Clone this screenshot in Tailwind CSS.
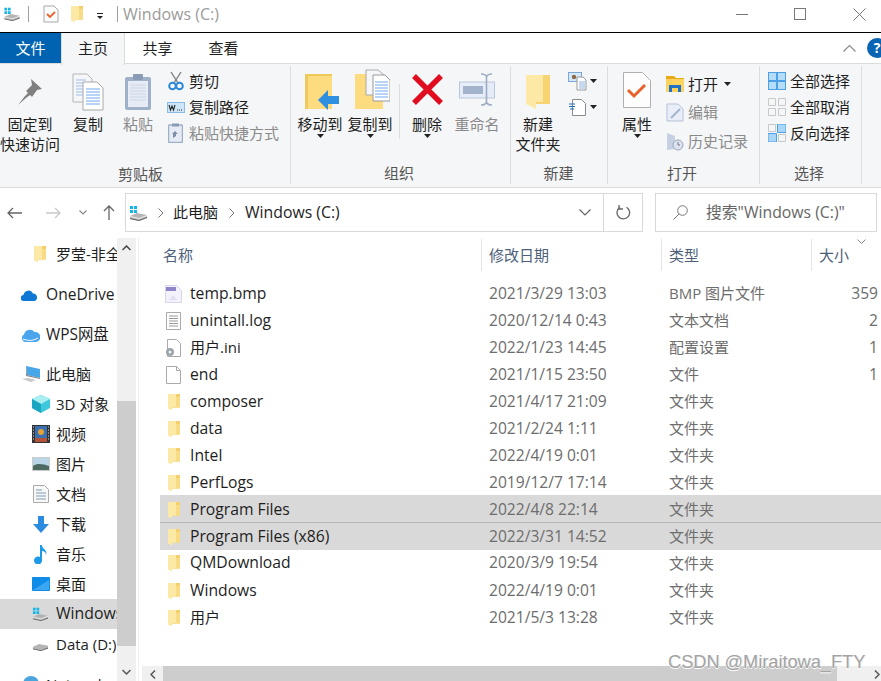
<!DOCTYPE html>
<html lang="zh-CN">
<head>
<meta charset="UTF-8">
<title>Windows (C:)</title>
<script src="https://cdn.jsdelivr.net/npm/@tailwindcss/browser@4"></script>
</head>
<body class="bg-white overflow-hidden">
<svg class="hidden">
  <defs>
    <symbol id="folder" viewBox="0 0 14 18">
      <path d="M2 1h11v13.500H2z" fill="#f4cf6c"/>
      <path d="M1 1h8v14H5v2.500L1 15.500z" fill="#fde9a6"/>
      <path d="M9 4h4v10.500H5V15h4z" fill="#f8dc85"/>
    </symbol>
    <symbol id="drive" viewBox="0 0 19 18">
      <path d="M1 12l7-3 10 2v3l-8 3-9-2z" fill="#b5b5b5"/>
      <path d="M1 12l9 2 8-3v1l-8 3-9-2z" fill="#f0f0f0"/>
      <path d="M1 14l9 2 8-3v1l-8 3-9-2z" fill="#666"/>
      <path d="M1 2h3v3H1zM5 2h3v3H5zM1 6h3v3H1zM5 6h3v3H5z" fill="#12b5ea"/>
    </symbol>
  </defs>
</svg>
<div class="relative w-[881px] h-[681px] overflow-hidden font-['Open_Sans','Noto_Sans_CJK_SC',sans-serif] text-[15px] text-[#1e1e1e]">

  <!-- title bar -->
  <div class="h-[32px] pb-[4px] flex items-center">
    <svg class="ml-[3px] w-[18px] h-[16px]"><use href="#drive"/></svg>
    <div class="ml-[7px] w-px h-[16px] bg-[#a0a0a0]"></div>
    <svg class="ml-[14px] w-[16px] h-[18px]" viewBox="0 0 16 18"><path d="M1 1h10l4 4v12H1z" fill="#fdfdfd" stroke="#a8a8a8"/><path d="M4 9l3 3 5-5" fill="none" stroke="#e8602c" stroke-width="1.800"/></svg>
    <svg class="ml-[11px] w-[14px] h-[18px]"><use href="#folder"/></svg>
    <svg class="ml-[12px] w-[8px] h-[8px] mt-[4px]" viewBox="0 0 8 8"><path d="M1 1h6v1H1z" fill="#222"/><path d="M1 4h6L4 7z" fill="#222"/></svg>
    <div class="ml-[13px] w-px h-[16px] bg-[#a0a0a0]"></div>
    <span class="ml-[5px] text-[#9b9b9b] text-[16px]">Windows (C:)</span>
    <div class="ml-auto flex items-center">
      <div class="w-[12px] h-px bg-[#777] mr-[46px]"></div>
      <div class="w-[12px] h-[12px] border border-[#777] mr-[47px]"></div>
      <svg class="w-[13px] h-[13px] mr-[15px]" viewBox="0 0 13 13"><path d="M0.500 0.500l12 12M12.500 0.500l-12 12" stroke="#777" fill="none"/></svg>
    </div>
  </div>
  <div class="h-px bg-black"></div>

  <!-- tabs -->
  <div class="h-[31px] flex items-stretch relative">
    <div class="w-[61px] bg-[#0063b1] text-white flex items-center justify-center">文件</div>
    <div class="w-[64px] pb-[2px] bg-[#f5f6f7] border-x border-[#dadbdc] relative z-10 h-[32px] flex items-center justify-center">主页</div>
    <div class="w-[65px] flex items-center justify-center">共享</div>
    <div class="w-[67px] flex items-center justify-center">查看</div>
    <div class="ml-auto pb-[2px] flex items-center">
      <svg class="w-[13px] h-[8px] mr-[11px]" viewBox="0 0 13 8"><path d="M0.500 7.500l6-6 6 6" fill="none" stroke="#8a8a8a" stroke-width="1.200"/></svg>
      <div class="w-[20px] h-[20px] -mr-[6px] rounded-full bg-[#0a64b4] text-white text-[14px] font-bold flex items-center justify-center">?</div>
    </div>
  </div>

  <!-- ribbon -->
  <div class="h-[123px] bg-[#f5f6f7] border-y border-[#dadbdc] flex box-content -mt-px relative">

    <div class="w-[291px] pt-[1px] relative flex flex-col">
      <div class="flex h-[100px]">
        <div class="w-[60px] flex flex-col items-center pt-[12px] shrink-0">
          <svg class="w-[28px] h-[28px]" viewBox="0 0 28 28"><path d="M15 2l11 10-5 1-5 7-2-2-4 3-8 7 7-9 3-3-2-2 6-6z" fill="#808080"/></svg>
          <div class="mt-[9px] leading-[20px] text-center whitespace-nowrap">固定到<br>快速访问</div>
        </div>
        <div class="w-[50px] ml-[3px] flex flex-col items-center pt-[8px] shrink-0">
          <svg class="w-[32px] h-[38px]" viewBox="0 0 32 38"><path d="M1 1h14l5 5v23H1z" fill="#f4f6fa" stroke="#b5b5b5"/><path d="M4 7h10M4 10h13M4 13h13M4 16h13M4 19h13M4 22h13" stroke="#9dbde8"/><path d="M11 9h14l6 6v22H11z" fill="#fff" stroke="#a8a8a8"/><path d="M14 16h14M14 19h14M14 22h14M14 25h14M14 28h14M14 31h14" stroke="#6ea6ef"/></svg>
          <div class="mt-[3px] leading-[20px]">复制</div>
        </div>
        <div class="w-[50px] flex flex-col items-center pt-[8px] shrink-0 text-[#8a8a8a]">
          <svg class="w-[28px] h-[38px]" viewBox="0 0 28 38"><rect x="1" y="4" width="26" height="33" rx="2" fill="#9fb1c9"/><rect x="4" y="8" width="20" height="26" fill="#e6ebf5"/><path d="M6 12h16M6 15h16M6 18h16M6 21h16M6 24h16M6 27h16" stroke="#ccd5e6"/><rect x="9" y="1" width="10" height="6" rx="1" fill="#8a9cb5"/></svg>
          <div class="mt-[3px] leading-[20px]">粘贴</div>
        </div>
        <div class="pt-[3px] flex flex-col shrink-0 ml-[5px]">
          <div class="h-[26px] flex items-center gap-[6px]">
            <svg class="w-[16px] h-[20px]" viewBox="0 0 16 20"><path d="M3 1l7 11M13 1L6 12" stroke="#777" stroke-width="1.300" fill="none"/><circle cx="4.500" cy="15" r="3.300" fill="none" stroke="#2b88d8" stroke-width="2"/><circle cx="11.500" cy="15" r="3.300" fill="none" stroke="#2b88d8" stroke-width="2"/></svg>
            <span class="-ml-[1px]">剪切</span>
          </div>
          <div class="h-[26px] flex items-center gap-[6px] -ml-[1px]">
            <svg class="w-[18px] h-[11px]" viewBox="0 0 18 11"><rect x="0.500" y="0.500" width="17" height="10" fill="#cfe6f8" stroke="#8abde6"/><path d="M2 3l1.500 5L5 4l1.500 4L8 3" fill="none" stroke="#222" stroke-width="1.100"/><path d="M10 8h1M12 8h1M14 8h1" stroke="#333"/></svg>
            <span class="-ml-[2px]">复制路径</span>
          </div>
          <div class="h-[26px] flex items-center gap-[6px] text-[#8a8a8a]">
            <svg class="w-[15px] h-[20px]" viewBox="0 0 15 20"><rect x="0.500" y="2" width="14" height="17.500" rx="1" fill="#e6ebf5" stroke="#9fb1c9" stroke-width="1.500"/><rect x="4" y="0.500" width="7" height="3" fill="#8a9cb5"/><path d="M5 15v-4l-1 0 3-3 3 3h-2v2z" fill="#7c8ea8"/></svg>
            <span>粘贴快捷方式</span>
          </div>
        </div>
      </div>
      <div class="text-center text-[#555] leading-[20px] mt-[-1px] pr-[10px]">剪贴板</div>
      <div class="absolute right-0 top-[2px] bottom-[3px] w-px bg-[#dcdddf]"></div>
    </div>

    <div class="w-[220px] relative flex flex-col">
      <div class="flex h-[100px]">
        <div class="w-[50px] ml-[4px] flex flex-col items-center pt-[9px] shrink-0">
          <svg class="w-[35px] h-[37px] ml-[4px]" viewBox="0 0 35 37"><path d="M0 1h27v35H0z" fill="#fcdc7e"/><path d="M0 1h27v2H3v33H0z" fill="#f0c95c"/><path d="M23 17v6h11v8H23v6L13 27z" fill="#2f8fe0"/></svg>
          <div class="mt-[4px] leading-[20px] whitespace-nowrap">移动到</div>
          <svg class="w-[7px] h-[4px]" viewBox="0 0 7 4"><path d="M0 0h7L3.500 4z" fill="#222"/></svg>
        </div>
        <div class="w-[50px] flex flex-col items-center pt-[5px] shrink-0">
          <svg class="w-[35px] h-[41px] ml-[4px]" viewBox="0 0 35 41"><path d="M0 5h28v35H0z" fill="#fcdc7e"/><path d="M11 1h12l6 5v20H11z" fill="#f4f6fa" stroke="#aaa"/><path d="M18 6h12l5 5v21H18z" fill="#fff" stroke="#999"/><path d="M20 13h13M20 16h13M20 19h13M20 22h13M20 25h13M20 28h13" stroke="#6ea6ef"/></svg>
          <div class="mt-[4px] leading-[20px] whitespace-nowrap">复制到</div>
          <svg class="w-[7px] h-[4px]" viewBox="0 0 7 4"><path d="M0 0h7L3.500 4z" fill="#222"/></svg>
        </div>
        <div class="w-[50px] ml-[7px] flex flex-col items-center pt-[9px] shrink-0">
          <svg class="w-[33px] h-[33px] mb-[4px]" viewBox="0 0 33 33"><path d="M3 3l27 27M30 3L3 30" stroke="#e10c1f" stroke-width="5.500" fill="none"/></svg>
          <div class="mt-[4px] leading-[20px]">删除</div>
          <svg class="w-[7px] h-[4px]" viewBox="0 0 7 4"><path d="M0 0h7L3.500 4z" fill="#222"/></svg>
        </div>
        <div class="w-[50px] flex flex-col items-center pt-[9px] shrink-0 text-[#8a8a8a]">
          <svg class="w-[36px] h-[33px] mb-[4px]" viewBox="0 0 36 33"><rect x="0.500" y="9" width="35" height="16" fill="#e6edf8" stroke="#b9c7dc"/><rect x="4" y="13" width="20" height="8" fill="#a3b3cb"/><path d="M22 1c3 0 5 1 5.500 3C28 2 30 1 33 1M27.500 4v25M22 32c3 0 5-1 5.500-3 .5 2 2.500 3 5.500 3" fill="none" stroke="#9eadc4" stroke-width="1.600"/></svg>
          <div class="mt-[4px] leading-[20px] whitespace-nowrap">重命名</div>
        </div>
      </div>
      <div class="text-center text-[#555] leading-[20px] mt-[-1px] pr-[4px]">组织</div>
      <div class="absolute left-[108px] top-[20px] h-[55px] w-px bg-[#dcdddf]"></div>
      <div class="absolute right-0 top-[2px] bottom-[3px] w-px bg-[#dcdddf]"></div>
    </div>

    <div class="w-[97px] relative flex flex-col">
      <div class="flex h-[100px]">
        <div class="w-[56px] flex flex-col items-center pt-[10px] shrink-0 -ml-[1px]">
          <svg class="w-[26px] h-[35px]" viewBox="0 0 26 35"><path d="M4 1h21v29H4z" fill="#f7d471"/><path d="M1 1h17v27h-7v7l-10-5z" fill="#fde9a6"/></svg>
          <div class="mt-[5px] leading-[20px] text-center">新建<br>文件夹</div>
        </div>
        <div class="pt-[4px] ml-[2px] shrink-0 flex flex-col">
          <div class="h-[26px] flex items-center">
            <svg class="w-[19px] h-[19px]" viewBox="0 0 19 19"><rect x="0.500" y="0.500" width="13" height="9" fill="#d7e8f8" stroke="#7aa7d8"/><circle cx="6" cy="5" r="2.200" fill="#8b6b4a"/><path d="M9 5h6l3 3v10H9z" fill="#fff" stroke="#999"/><path d="M11 10h6M11 12h6M11 14h6M11 16h6" stroke="#8fb3e0"/></svg>
            <svg class="ml-[3px] w-[7px] h-[4px]" viewBox="0 0 7 4"><path d="M0 0h7L3.500 4z" fill="#222"/></svg>
          </div>
          <div class="h-[26px] flex items-center">
            <svg class="w-[19px] h-[19px]" viewBox="0 0 19 19"><path d="M4.500 1.500h9l4 4v12h-13z" fill="#fff" stroke="#8a8a8a"/><path d="M1 6h6M1 8.500h6M2 11h4" stroke="#1f6fb5"/></svg>
            <svg class="ml-[3px] w-[7px] h-[4px]" viewBox="0 0 7 4"><path d="M0 0h7L3.500 4z" fill="#222"/></svg>
          </div>
        </div>
      </div>
      <div class="text-center text-[#555] leading-[20px] mt-[-1px] pr-[2px]">新建</div>
      <div class="absolute right-0 top-[2px] bottom-[3px] w-px bg-[#dcdddf]"></div>
    </div>

    <div class="w-[152px] relative flex flex-col">
      <div class="flex h-[100px]">
        <div class="w-[58px] flex flex-col items-center pt-[8px] shrink-0">
          <svg class="w-[28px] h-[36px]" viewBox="0 0 28 36"><path d="M0.500 0.500h19l8 8v27h-27z" fill="#fdfdfd" stroke="#b0b0b0"/><path d="M5 18l6 6 11-11" fill="none" stroke="#e8602c" stroke-width="3"/></svg>
          <div class="mt-[6px] leading-[20px]">属性</div>
          <svg class="w-[7px] h-[4px]" viewBox="0 0 7 4"><path d="M0 0h7L3.500 4z" fill="#222"/></svg>
        </div>
        <div class="pt-[7px] flex flex-col shrink-0">
          <div class="h-[26px] flex items-center">
            <svg class="w-[18px] h-[16px]" viewBox="0 0 18 16"><path d="M0 0h8l2 2h8v4H0z" fill="#e8a916"/><path d="M0 3h18v13H0z" fill="#fcd35f"/><path d="M3 16v-7h12v7h-3v-4H6v4z" fill="#1e72c8"/></svg>
            <span class="ml-[4px]">打开</span>
            <svg class="ml-[6px] w-[7px] h-[4px]" viewBox="0 0 7 4"><path d="M0 0h7L3.500 4z" fill="#222"/></svg>
          </div>
          <div class="h-[30px] flex items-center text-[#8a8a8a]">
            <svg class="w-[18px] h-[19px]" viewBox="0 0 18 19"><path d="M1 1h11l5 5v12H1z" fill="#e9eef8" stroke="#b3c1d8"/><path d="M5 15l9-9" stroke="#a5b4cd" stroke-width="2"/></svg>
            <span class="ml-[4px]">编辑</span>
          </div>
          <div class="h-[28px] flex items-center text-[#8a8a8a]">
            <svg class="w-[18px] h-[19px]" viewBox="0 0 18 19"><path d="M1 1l8 3v13l-8 1z" fill="#c5d0e2"/><circle cx="12" cy="13" r="5" fill="#dde3ee" stroke="#9aa7bb"/><path d="M12 10v3h2" stroke="#778" fill="none"/></svg>
            <span class="ml-[4px]">历史记录</span>
          </div>
        </div>
      </div>
      <div class="text-center text-[#555] leading-[20px] mt-[-1px] pr-[4px]">打开</div>
      <div class="absolute right-0 top-[2px] bottom-[3px] w-px bg-[#dcdddf]"></div>
    </div>

    <div class="w-[102px] relative flex flex-col">
      <div class="h-[100px] pt-[4px] pl-[8px] flex flex-col">
        <div class="h-[26px] flex items-center">
          <svg class="w-[18px] h-[18px]" viewBox="0 0 18 18"><rect width="18" height="18" fill="#4ba0e8"/><path d="M1 1h7v7H1zM10 1h7v7h-7zM1 10h7v7H1zM10 10h7v7h-7z" fill="#b5dcf8"/></svg>
          <span class="ml-[4px]">全部选择</span>
        </div>
        <div class="h-[26px] flex items-center">
          <svg class="w-[18px] h-[18px]" viewBox="0 0 18 18"><path d="M.500.500h7v7h-7zM10.500.500h7v7h-7zM.500 10.500h7v7h-7zM10.500 10.500h7v7h-7z" fill="#f5f6f7" stroke="#c8c8c8"/></svg>
          <span class="ml-[4px]">全部取消</span>
        </div>
        <div class="h-[26px] flex items-center">
          <svg class="w-[18px] h-[18px]" viewBox="0 0 18 18"><path d="M.500.500h7v7h-7zM10.500 10.500h7v7h-7z" fill="#f5f6f7" stroke="#c8c8c8"/><path d="M9.500 0h8.500v8.500H9.500zM0 9.500h8.500V18H0z" fill="#a9d6f7" stroke="#4ba0e8"/></svg>
          <span class="ml-[4px]">反向选择</span>
        </div>
      </div>
      <div class="text-center text-[#555] leading-[20px] mt-[-1px] pr-[4px]">选择</div>
      <div class="absolute right-0 top-[2px] bottom-[3px] w-px bg-[#dcdddf]"></div>
    </div>
  </div>

  <!-- address row -->
  <div class="h-[50px] pb-[1px] flex items-center">
    <div class="w-[125px] shrink-0 flex items-center">
      <svg class="ml-[7px] w-[15px] h-[12px]" viewBox="0 0 15 12"><path d="M6 1L1 6l5 5M1 6h14" fill="none" stroke="#666" stroke-width="1.300"/></svg>
      <svg class="ml-[24px] w-[15px] h-[12px]" viewBox="0 0 15 12"><path d="M9 1l5 5-5 5M14 6H0" fill="none" stroke="#c9c9c9" stroke-width="1.300"/></svg>
      <svg class="ml-[18px] w-[8px] h-[5px]" viewBox="0 0 8 5"><path d="M.5.500l3.500 3.500L7.500.500" fill="none" stroke="#888" stroke-width="1.200"/></svg>
      <svg class="ml-[16px] w-[12px] h-[15px]" viewBox="0 0 12 15"><path d="M1 6l5-5 5 5M6 1v14" fill="none" stroke="#666" stroke-width="1.300"/></svg>
    </div>
    <div class="w-[518px] h-[39px] border border-[#d9d9d9] flex items-center shrink-0">
      <svg class="ml-[3px] w-[19px] h-[18px]"><use href="#drive"/></svg>
      <svg class="ml-[10px] w-[6px] h-[10px]" viewBox="0 0 6 10"><path d="M.5.500L5 5 .5 9.500" fill="none" stroke="#777"/></svg>
      <span class="ml-[9px]">此电脑</span>
      <svg class="ml-[11px] w-[6px] h-[10px]" viewBox="0 0 6 10"><path d="M.5.500L5 5 .5 9.500" fill="none" stroke="#777"/></svg>
      <span class="ml-[10px] text-[15.800px]">Windows (C:)</span>
      <div class="ml-auto flex items-center h-full">
        <svg class="w-[12px] h-[7px]" viewBox="0 0 12 7"><path d="M.5.500L6 6l5.500-5.500" fill="none" stroke="#666" stroke-width="1.200"/></svg>
        <div class="ml-[12px] w-px h-full bg-[#d9d9d9]"></div>
        <svg class="ml-[12px] mr-[11px] w-[15px] h-[15px]" viewBox="0 0 15 15"><path d="M10.500 2.200A6.300 6.300 0 1 1 4 2.300" fill="none" stroke="#666" stroke-width="1.300"/><path d="M3 0v4h4" fill="none" stroke="#666" stroke-width="1.300"/></svg>
      </div>
    </div>
    <div class="ml-[12px] w-[222px] h-[39px] border border-[#d9d9d9] flex items-center shrink-0">
      <svg class="ml-[17px] w-[15px] h-[15px]" viewBox="0 0 15 15"><circle cx="9.500" cy="5.500" r="4.800" fill="none" stroke="#777"/><path d="M6 9l-5.500 5.500" stroke="#777"/></svg>
      <span class="ml-[18px] text-[#666] text-[15.800px]">搜索"Windows (C:)"</span>
    </div>
  </div>

  <!-- main -->
  <div class="flex h-[444px]">
    <!-- navigation pane -->
    <div class="w-[117px] shrink-0 overflow-hidden whitespace-nowrap">
      <div class="h-[30px] pl-[33px] flex items-center mt-[1px]"><svg class="w-[14px] h-[18px] shrink-0"><use href="#folder"/></svg><span class="ml-[9px]">罗莹-非全</span></div>
      <div class="h-[30px] pt-[2px] mt-[10px] pl-[21px] flex items-center"><svg class="w-[17px] h-[11px] shrink-0" viewBox="0 0 17 11"><path d="M3 11a3 3 0 0 1-.5-6A5 5 0 0 1 12 3.500 4 4 0 0 1 14 11z" fill="#0f78d4"/></svg><span class="ml-[8px] text-[15.600px]">OneDrive</span></div>
      <div class="h-[30px] pt-[2px] mt-[10px] pl-[21px] flex items-center"><svg class="w-[19px] h-[14px] shrink-0" viewBox="0 0 19 14"><path d="M4 14a4 4 0 0 1-1-7.500A6 6 0 0 1 13.500 4 5 5 0 0 1 15 14z" fill="#4aa5ec"/><path d="M2 11c5 2 10 2 15-1" stroke="#fff" fill="none"/></svg><span class="ml-[6px] text-[15.400px]">WPS网盘</span></div>
      <div class="h-[30px] mt-[10px] pl-[22px] flex items-center"><svg class="w-[19px] h-[18px] shrink-0" viewBox="0 0 19 18"><path d="M4 1l14 3v9L5 10z" fill="#48a7e8"/><path d="M4 1l1 9 13 3v1L4 11z" fill="#888"/><path d="M0 14l6-1 8 2-5 2z" fill="#c9c9c9"/></svg><span class="ml-[5px]">此电脑</span></div>
      <div class="h-[30px] pl-[32px] flex items-center"><svg class="w-[18px] h-[18px] shrink-0" viewBox="0 0 18 18"><path d="M9 0l9 4v9l-9 5-9-5V4z" fill="#3fc7dc"/><path d="M9 0l9 4-9 5-9-5z" fill="#a9eef3"/><path d="M9 9v9l-9-5V4z" fill="#1aa6c0"/></svg><span class="ml-[6px]">3D 对象</span></div>
      <div class="h-[30px] pl-[32px] flex items-center"><svg class="w-[18px] h-[18px] shrink-0" viewBox="0 0 18 18"><rect width="18" height="18" fill="#333"/><path d="M1 2h1M1 5h1M1 8h1M1 11h1M1 14h1M16 2h1M16 5h1M16 8h1M16 11h1M16 14h1" stroke="#ddd"/><rect x="3" y="1" width="12" height="16" fill="#3a6fb0"/><circle cx="9" cy="7" r="3" fill="#e2a23a"/><path d="M3 13h12v4H3z" fill="#b3523a"/></svg><span class="ml-[6px]">视频</span></div>
      <div class="h-[30px] pl-[32px] flex items-center"><svg class="w-[18px] h-[14px] shrink-0" viewBox="0 0 18 14"><rect width="18" height="14" fill="#ccc"/><rect x="1" y="1" width="16" height="12" fill="#b9d6e8"/><path d="M1 9c4-3 10-2 16 0v4H1z" fill="#4d6b62"/></svg><span class="ml-[6px]">图片</span></div>
      <div class="h-[30px] pl-[33px] flex items-center"><svg class="w-[16px] h-[18px] shrink-0" viewBox="0 0 16 18"><path d="M.5.500h11l4 4v13H.5z" fill="#f8f8f8" stroke="#aaa"/><path d="M3 5h6M3 8h10M3 11h10M3 14h10" stroke="#7f99b5"/></svg><span class="ml-[7px]">文档</span></div>
      <div class="h-[30px] pl-[33px] flex items-center"><svg class="w-[16px] h-[17px] shrink-0" viewBox="0 0 16 17"><path d="M5 0h6v8h5l-8 9-8-9h5z" fill="#2b8be0"/></svg><span class="ml-[7px]">下载</span></div>
      <div class="h-[30px] pl-[34px] flex items-center"><svg class="w-[14px] h-[19px] shrink-0" viewBox="0 0 14 19"><path d="M6 0h2c0 4 6 5 4 10 0-3-2-4-4-4v9a4 4 0 1 1-2-3z" fill="#1c9ae8"/></svg><span class="ml-[8px]">音乐</span></div>
      <div class="h-[30px] pl-[32px] flex items-center"><svg class="w-[18px] h-[14px] shrink-0" viewBox="0 0 18 14"><rect width="18" height="14" rx="1" fill="#0f8be8"/><path d="M1 13L17 3v10z" fill="#3ba6f2"/></svg><span class="ml-[6px]">桌面</span></div>
      <div class="h-[30px] pl-[31px] flex items-center bg-[#d9d9d9]"><svg class="w-[19px] h-[16px] shrink-0"><use href="#drive"/></svg><span class="ml-[6px] text-[15.800px]">Windows (C:)</span></div>
      <div class="h-[30px] pl-[31px] flex items-center"><svg class="w-[19px] h-[16px] shrink-0" viewBox="0 0 19 18"><path d="M1 12l7-3 10 2v3l-8 3-9-2z" fill="#b5b5b5"/><path d="M1 14l9 2 8-3v1l-8 3-9-2z" fill="#666"/></svg><span class="ml-[6px]">Data (D:)</span></div>
      <div class="h-[30px] mt-[10px] pl-[22px] flex items-center"><svg class="w-[18px] h-[18px] shrink-0" viewBox="0 0 18 18"><circle cx="9" cy="9" r="8" fill="#4aa5dc"/></svg><span class="ml-[6px]">Network</span></div>
    </div>
    <!-- nav scrollbar -->
    <div class="w-[19px] shrink-0 bg-[#f0f0f0] flex flex-col items-center">
      <div class="h-[163px] w-full flex justify-center pt-[7px]"><svg class="w-[9px] h-[6px]" viewBox="0 0 9 6"><path d="M.5 5L4.500 1l4 4" fill="none" stroke="#444" stroke-width="1.500"/></svg></div>
      <div class="h-[245px] w-full bg-[#cdcdcd]"></div>
      <div class="flex-1 w-full flex justify-center pt-[23px]"><svg class="w-[9px] h-[6px]" viewBox="0 0 9 6"><path d="M.5 1L4.500 5l4-4" fill="none" stroke="#555" stroke-width="1.500"/></svg></div>
    </div>
    <div class="w-[2px] shrink-0"></div>
    <div class="w-px shrink-0 bg-[#f0f0f0]"></div>

    <!-- file list -->
    <div class="flex-1 min-w-0 flex flex-col relative overflow-hidden">
      <div class="h-[41px] pt-[1px] flex shrink-0 text-[#4c607a]">
        <div class="w-[343px] pl-[24px] h-[32px] flex items-center shrink-0 border-r border-[#e5e5e5]">名称</div>
        <div class="w-[180px] pl-[7px] h-[32px] flex items-center shrink-0 border-r border-[#e5e5e5]">修改日期</div>
        <div class="w-[150px] pl-[7px] h-[32px] flex items-center shrink-0 border-r border-[#e5e5e5]">类型</div>
        <div class="flex-1 pl-[7px] h-[32px] flex items-center relative">大小
          <svg class="absolute left-[45px] top-0 w-[9px] h-[5px]" viewBox="0 0 9 5"><path d="M.5.500L4.500 4.500l4-4" fill="none" stroke="#888"/></svg>
        </div>
      </div>
      <div class="pl-[21px] flex flex-col text-[#6d6d6d]">
        <div class="h-[27px] pt-[2px] flex items-center"><svg class="ml-[5px] w-[17px] h-[18px] shrink-0" viewBox="0 0 17 18"><path d="M.5.500h11l5 5v12H.5z" fill="#f3f1fb" stroke="#d8d4ea"/><path d="M1 2h10v4H1z" fill="#8f85c9"/><path d="M4 15l4-5 4 5z" fill="#e2def3"/></svg><span class="ml-[8px] w-[299px] text-[#1e1e1e] text-[15.700px] shrink-0">temp.bmp</span><span class="w-[180px] text-[15.600px] shrink-0">2021/3/29 13:03</span><span class="w-[150px] shrink-0">BMP 图片文件</span><span class="flex-1 text-right pr-[3px] text-[15.600px]">359</span></div>
        <div class="h-[27px] pt-[2px] flex items-center"><svg class="ml-[5px] w-[17px] h-[18px] shrink-0" viewBox="0 0 17 18"><path d="M1.500.500h14v17h-14z" fill="#fff" stroke="#aaa"/><path d="M4 4h9M4 6.500h9M4 9h9M4 11.500h9M4 14h9" stroke="#9a9a9a"/></svg><span class="ml-[8px] w-[299px] text-[#1e1e1e] text-[15.700px] shrink-0">unintall.log</span><span class="w-[180px] text-[15.600px] shrink-0">2020/12/14 0:43</span><span class="w-[150px] shrink-0">文本文档</span><span class="flex-1 text-right pr-[3px] text-[15.600px]">2</span></div>
        <div class="h-[27px] pt-[2px] flex items-center"><svg class="ml-[5px] w-[17px] h-[18px] shrink-0" viewBox="0 0 17 18"><path d="M2.500.500h9l4 4v13h-13z" fill="#fff" stroke="#aaa"/><circle cx="5" cy="13" r="4" fill="#9aa4ad"/><circle cx="5" cy="13" r="1.500" fill="#eee"/></svg><span class="ml-[8px] w-[299px] text-[#1e1e1e] shrink-0">用户.ini</span><span class="w-[180px] text-[15.600px] shrink-0">2022/1/23 14:45</span><span class="w-[150px] shrink-0">配置设置</span><span class="flex-1 text-right pr-[3px] text-[15.600px]">1</span></div>
        <div class="h-[27px] pt-[2px] flex items-center"><svg class="ml-[5px] w-[17px] h-[18px] shrink-0" viewBox="0 0 17 18"><path d="M1.500.500h10l4 4v13h-14z" fill="#fff" stroke="#aaa"/><path d="M11.500.500v4h4" fill="none" stroke="#aaa"/></svg><span class="ml-[8px] w-[299px] text-[#1e1e1e] text-[15.700px] shrink-0">end</span><span class="w-[180px] text-[15.600px] shrink-0">2021/1/15 23:50</span><span class="w-[150px] shrink-0">文件</span><span class="flex-1 text-right pr-[3px] text-[15.600px]">1</span></div>
        <div class="h-[27px] pt-[2px] flex items-center"><svg class="ml-[7px] w-[14px] h-[18px] mr-[1px] shrink-0"><use href="#folder"/></svg><span class="ml-[8px] w-[299px] text-[#1e1e1e] text-[15.700px] shrink-0">composer</span><span class="w-[180px] text-[15.600px] shrink-0">2021/4/17 21:09</span><span class="w-[150px] shrink-0">文件夹</span></div>
        <div class="h-[27px] pt-[2px] flex items-center"><svg class="ml-[7px] w-[14px] h-[18px] mr-[1px] shrink-0"><use href="#folder"/></svg><span class="ml-[8px] w-[299px] text-[#1e1e1e] text-[15.700px] shrink-0">data</span><span class="w-[180px] text-[15.600px] shrink-0">2021/2/24 1:11</span><span class="w-[150px] shrink-0">文件夹</span></div>
        <div class="h-[27px] pt-[2px] flex items-center"><svg class="ml-[7px] w-[14px] h-[18px] mr-[1px] shrink-0"><use href="#folder"/></svg><span class="ml-[8px] w-[299px] text-[#1e1e1e] text-[15.700px] shrink-0">Intel</span><span class="w-[180px] text-[15.600px] shrink-0">2022/4/19 0:01</span><span class="w-[150px] shrink-0">文件夹</span></div>
        <div class="h-[27px] pt-[2px] flex items-center"><svg class="ml-[7px] w-[14px] h-[18px] mr-[1px] shrink-0"><use href="#folder"/></svg><span class="ml-[8px] w-[299px] text-[#1e1e1e] text-[15.700px] shrink-0">PerfLogs</span><span class="w-[180px] text-[15.600px] shrink-0">2019/12/7 17:14</span><span class="w-[150px] shrink-0">文件夹</span></div>
        <div class="h-[28px] pt-[2px] flex items-center bg-[#d9d9d9] border-b border-[#b8b8b8]"><svg class="ml-[7px] w-[14px] h-[18px] mr-[1px] shrink-0"><use href="#folder"/></svg><span class="ml-[8px] w-[299px] text-[#1e1e1e] text-[15.700px] shrink-0">Program Files</span><span class="w-[180px] text-[15.600px] shrink-0">2022/4/8 22:14</span><span class="w-[150px] shrink-0">文件夹</span></div>
        <div class="h-[27px] flex items-center bg-[#d9d9d9]"><svg class="ml-[7px] w-[14px] h-[18px] mr-[1px] shrink-0"><use href="#folder"/></svg><span class="ml-[8px] w-[299px] text-[#1e1e1e] text-[15.700px] shrink-0">Program Files (x86)</span><span class="w-[180px] text-[15.600px] shrink-0">2022/3/31 14:52</span><span class="w-[150px] shrink-0">文件夹</span></div>
        <div class="h-[26px] flex items-center"><svg class="ml-[7px] w-[14px] h-[18px] mr-[1px] shrink-0"><use href="#folder"/></svg><span class="ml-[8px] w-[299px] text-[#1e1e1e] text-[15.700px] shrink-0">QMDownload</span><span class="w-[180px] text-[15.600px] shrink-0">2020/3/9 19:54</span><span class="w-[150px] shrink-0">文件夹</span></div>
        <div class="h-[27px] pt-[2px] flex items-center"><svg class="ml-[7px] w-[14px] h-[18px] mr-[1px] shrink-0"><use href="#folder"/></svg><span class="ml-[8px] w-[299px] text-[#1e1e1e] text-[15.700px] shrink-0">Windows</span><span class="w-[180px] text-[15.600px] shrink-0">2022/4/19 0:01</span><span class="w-[150px] shrink-0">文件夹</span></div>
        <div class="h-[27px] pt-[2px] flex items-center"><svg class="ml-[7px] w-[14px] h-[18px] mr-[1px] shrink-0"><use href="#folder"/></svg><span class="ml-[8px] w-[299px] text-[#1e1e1e] shrink-0">用户</span><span class="w-[180px] text-[15.600px] shrink-0">2021/5/3 13:28</span><span class="w-[150px] shrink-0">文件夹</span></div>
      </div>
      <!-- horizontal scrollbar -->
      <div class="mt-auto h-[16px] shrink-0 ml-[3px] flex bg-[#f0f0f0]">
        <div class="w-[21px] flex items-center justify-center"><svg class="w-[6px] h-[9px]" viewBox="0 0 6 9"><path d="M5 .5L1 4.500l4 4" fill="none" stroke="#555" stroke-width="1.500"/></svg></div>
        <div class="w-[674px] bg-[#cdcdcd]"></div>
        <div class="flex-1 flex items-center justify-end pr-[1px]"><svg class="w-[6px] h-[9px]" viewBox="0 0 6 9"><path d="M1 .5l4 4-4 4" fill="none" stroke="#555" stroke-width="1.500"/></svg></div>
      </div>
    </div>
  </div>

  <div class="absolute left-[668px] top-[651px] font-['Liberation_Sans',sans-serif] text-[18.200px] leading-[22px] whitespace-nowrap text-[#a3a3a3] [text-shadow:0_1px_0_#fff,1px_0_0_#e8e8e8]">CSDN @Miraitowa_FTY</div>
</div>
</body>
</html>
